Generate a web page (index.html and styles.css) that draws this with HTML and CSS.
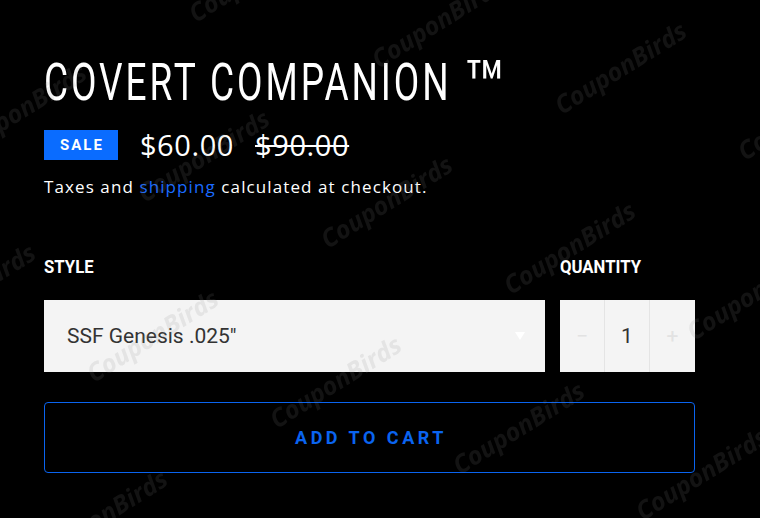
FILE: index.html
```html
<!DOCTYPE html>
<html lang="en">
<head>
<meta charset="utf-8">
<title>Covert Companion</title>
<link rel="stylesheet" href="styles.css">
</head>
<body>
<main class="page">
  <h1 class="title">COVERT COMPANION<span class="tm">™</span></h1>
  <div class="price-row">
    <span class="badge">SALE</span>
    <span class="price">$60.00</span>
    <s class="compare">$90.00</s>
  </div>
  <p class="tax">Taxes and <a class="link" href="#">shipping</a> calculated at checkout.</p>
  <div class="fields">
    <div class="field field-style">
      <div class="label"><span class="label-text">STYLE</span></div>
      <div class="select">
        <span class="select-value">SSF Genesis .025"</span>
        <span class="arrow"></span>
      </div>
    </div>
    <div class="field field-qty">
      <div class="label"><span class="label-text">QUANTITY</span></div>
      <div class="qty">
        <span class="qty-btn">−</span>
        <span class="qty-num">1</span>
        <span class="qty-btn">+</span>
      </div>
    </div>
  </div>
  <button class="cart" type="button">ADD TO CART</button>
</main>
<div class="watermarks" aria-hidden="true">
  <span class="wm w1">CouponBirds</span>
  <span class="wm w2">CouponBirds</span>
  <span class="wm w3">CouponBirds</span>
  <span class="wm w4">CouponBirds</span>
  <span class="wm w5">CouponBirds</span>
  <span class="wm w6">CouponBirds</span>
  <span class="wm w7">CouponBirds</span>
  <span class="wm w8">CouponBirds</span>
  <span class="wm w9">CouponBirds</span>
  <span class="wm w10">CouponBirds</span>
  <span class="wm w11">CouponBirds</span>
  <span class="wm w12">CouponBirds</span>
  <span class="wm w13">CouponBirds</span>
  <span class="wm w14">CouponBirds</span>
  <span class="wm w15">CouponBirds</span>
  <span class="wm w16">CouponBirds</span>
</div>
</body>
</html>
```

FILE: styles.css
```css
html, body {
  margin: 0;
  padding: 0;
  background: #000;
}

body {
  width: 760px;
  height: 518px;
  overflow: hidden;
  position: relative;
  font-family: "Open Sans", "DejaVu Sans", sans-serif;
  color: #fff;
}

.page {
  padding: 58px 0 0 44px;
  width: 651px;
}

.title {
  margin: 0;
  font-family: "Roboto", "Liberation Sans", sans-serif;
  font-weight: 400;
  font-size: 51px;
  line-height: 50px;
  letter-spacing: 4px;
  color: #fff;
  white-space: nowrap;
  transform: scaleX(0.726);
  transform-origin: left top;
}

.tm {
  display: inline-block;
  font-size: 70px;
  line-height: 0;
  margin-left: 17px;
  letter-spacing: 0;
  position: relative;
  top: 10px;
  transform: scaleX(1.35);
  transform-origin: left center;
}

.price-row {
  display: flex;
  align-items: center;
  height: 30px;
  margin-top: 22px;
}

.badge {
  display: inline-block;
  background: #0a6cff;
  color: #fff;
  font-family: "Roboto", "Liberation Sans", sans-serif;
  font-weight: 700;
  font-size: 15px;
  letter-spacing: 2px;
  line-height: 30px;
  padding: 0 14px 0 16px;
}

.price, .compare {
  font-family: "Open Sans", sans-serif;
  font-size: 29px;
  letter-spacing: 0.6px;
  line-height: 30px;
  color: #fff;
}

.price {
  margin-left: 22px;
}

.compare {
  margin-left: 21px;
  text-decoration-thickness: 2px;
}

.tax {
  margin: 15px 0 0;
  font-size: 17px;
  letter-spacing: 1.1px;
  line-height: 24px;
  color: #fff;
}

.link {
  color: #1a6bff;
  text-decoration: none;
}

.fields {
  display: flex;
  gap: 15px;
  margin-top: 58px;
}

.field-style {
  width: 501px;
}

.field-qty {
  width: 135px;
}

.label {
  font-family: "Roboto", "Liberation Sans", sans-serif;
  font-weight: 700;
  font-size: 19px;
  line-height: 20px;
  color: #fff;
  margin-bottom: 23px;
}

.label-text {
  display: inline-block;
  transform: scaleX(0.88);
  transform-origin: left center;
}

.select {
  height: 72px;
  background: #f4f4f4;
  display: flex;
  align-items: center;
  justify-content: space-between;
  padding: 0 20px 0 23px;
}

.select-value {
  font-family: "Roboto", "Liberation Sans", sans-serif;
  font-size: 21px;
  color: #333;
}

.arrow {
  width: 0;
  height: 0;
  border-left: 5px solid transparent;
  border-right: 5px solid transparent;
  border-top: 8px solid #fff;
}

.qty {
  height: 72px;
  background: #f4f4f4;
  display: grid;
  grid-template-columns: 44px 46px 45px;
}

.qty > span {
  display: flex;
  align-items: center;
  justify-content: center;
  font-family: "Roboto", "Liberation Sans", sans-serif;
  font-size: 21px;
}

.qty-num {
  color: #333;
  border-left: 1px solid #e4e4e4;
  border-right: 1px solid #e4e4e4;
}

.qty-btn {
  color: #e2e2e2;
}

.cart {
  display: block;
  margin-top: 30px;
  width: 651px;
  height: 71px;
  background: transparent;
  border: 1px solid #0a64f0;
  border-radius: 4px;
  color: #0a64f0;
  font-family: "Roboto", "Liberation Sans", sans-serif;
  font-weight: 700;
  font-size: 18px;
  letter-spacing: 3.5px;
  padding: 0 0 0 3px;
  cursor: pointer;
}

.watermarks {
  position: absolute;
  inset: 0;
  pointer-events: none;
  overflow: hidden;
}

.wm {
  position: absolute;
  transform: translate(-50%, -50%) rotate(-32deg);
  font-family: "Open Sans", sans-serif;
  font-weight: 700;
  font-style: italic;
  font-size: 25px;
  color: rgba(136, 136, 136, 0.14);
  white-space: nowrap;
}

.w1 { left: 254px; top: -25px; }
.w2 { left: 437px; top: 21px; }
.w3 { left: 620px; top: 67px; }
.w4 { left: 803px; top: 113px; }
.w5 { left: 20px; top: 109px; }
.w6 { left: 203px; top: 155px; }
.w7 { left: 386px; top: 201px; }
.w8 { left: 569px; top: 247px; }
.w9 { left: 752px; top: 293px; }
.w10 { left: -31px; top: 289px; }
.w11 { left: 152px; top: 335px; }
.w12 { left: 335px; top: 381px; }
.w13 { left: 518px; top: 427px; }
.w14 { left: 701px; top: 473px; }
.w15 { left: 101px; top: 515px; }
.w16 { left: 284px; top: 561px; }
```
